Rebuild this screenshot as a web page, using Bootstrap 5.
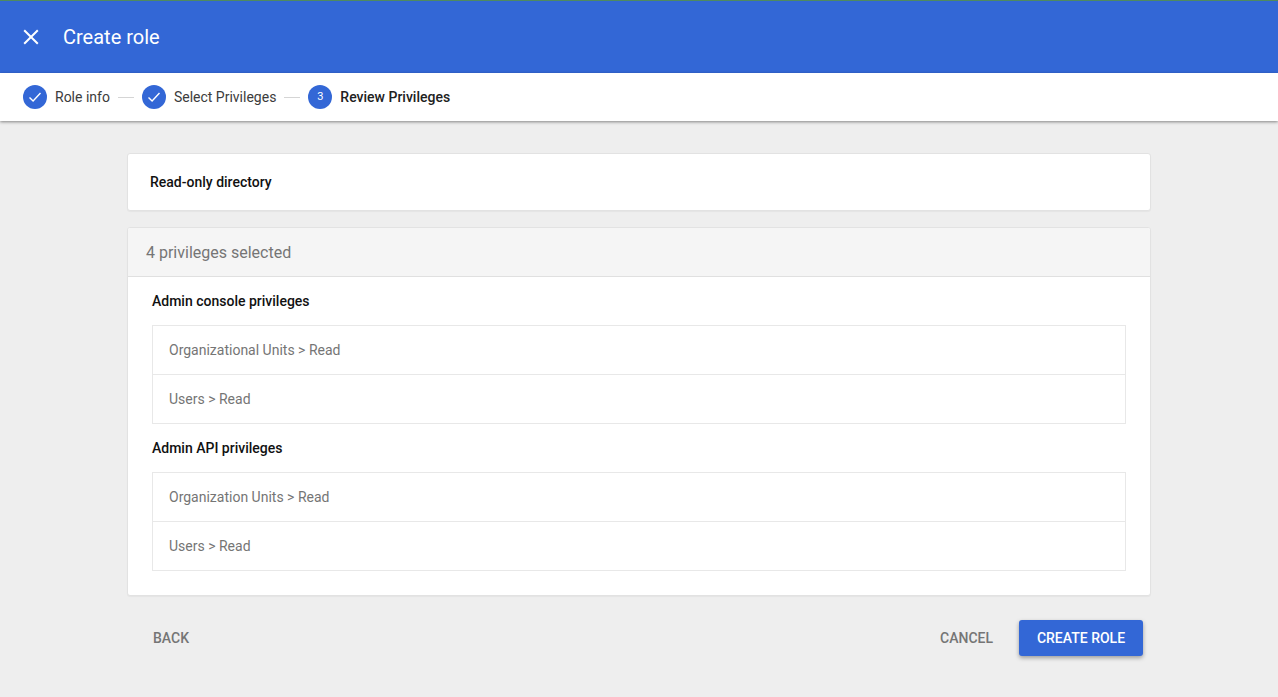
<!DOCTYPE html>
<html lang="en">
<head>
<meta charset="utf-8">
<title>Create role</title>
<link href="https://cdn.jsdelivr.net/npm/bootstrap@5.3.0/dist/css/bootstrap.min.css" rel="stylesheet">
<style>
html,body{height:697px;overflow:hidden}
body{background:#eee;font-family:Roboto,"Liberation Sans",sans-serif;font-size:14px;color:#212121}
.app-bar{height:73px;background:#3367d6;border-top:1px solid #4f8a5f;color:#fff;padding-left:23px;gap:24px}
.app-bar svg{display:block}
.app-title{font-size:20px;line-height:24px}
.stepper{height:48px;background:#fff;padding-left:23px;box-shadow:0 1px 3px rgba(0,0,0,.45);position:relative}
.step-dot{width:24px;height:24px;border-radius:50%;background:#3367d6;color:#fff;font-size:11px;flex:none}
.step-name{margin-left:8px;color:#3c3c3c;padding-top:1px}
.step-on{font-weight:500;color:#212121}
.step-line{width:16px;height:1px;background:#d5d5d5;margin:0 8px}
.page-body{width:1024px;margin:32px 0 0 127px}
.pane{background:#fff;border:1px solid #e2e2e2;border-radius:3px;box-shadow:0 1px 1px rgba(0,0,0,.04)}
.name-pane{height:58px;padding-left:22px;font-weight:500;color:#111}
.priv-pane{margin-top:16px;height:369px;overflow:hidden}
.priv-head{height:49px;background:#f5f5f5;border-bottom:1px solid #e0e0e0;padding:1px 0 0 18px;font-size:16px;color:#757575}
.priv-main{padding:0 24px}
.group-label{height:48px;font-weight:500;color:#111}
.priv-list{border:1px solid #e8e8e8}
.priv-row{height:48px;padding-left:16px;color:#757575}
.priv-row+.priv-row{height:49px;border-top:1px solid #e8e8e8}
.foot{margin-top:24px;padding:0 8px 0 26px;height:36px}
.txt-btn{font-weight:500;color:#757575;font-size:14px;background:none;border:0;padding:0;text-transform:uppercase}
.main-btn{width:124px;height:36px;background:#3367d6;color:#fff;font-weight:500;font-size:14px;border:0;border-radius:3px;box-shadow:0 2px 4px rgba(0,0,0,.35);padding:0;text-transform:uppercase;margin-left:26px}
</style>
</head>
<body>
<header class="app-bar d-flex align-items-center">
  <svg width="16" height="16" viewBox="0 0 16 16" aria-hidden="true"><path d="M1.2 1.2l13.6 13.6M14.8 1.2L1.2 14.8" stroke="#fff" stroke-width="2" fill="none"/></svg>
  <div class="app-title">Create role</div>
</header>
<nav class="stepper d-flex align-items-center">
  <span class="step-dot d-flex align-items-center justify-content-center"><svg width="14" height="12" viewBox="0 0 14 12" aria-hidden="true"><path d="M1.5 6.5l3.6 3.6 7.4-8" stroke="#fff" stroke-width="1.4" fill="none"/></svg></span>
  <span class="step-name">Role info</span>
  <span class="step-line"></span>
  <span class="step-dot d-flex align-items-center justify-content-center"><svg width="14" height="12" viewBox="0 0 14 12" aria-hidden="true"><path d="M1.5 6.5l3.6 3.6 7.4-8" stroke="#fff" stroke-width="1.4" fill="none"/></svg></span>
  <span class="step-name">Select Privileges</span>
  <span class="step-line"></span>
  <span class="step-dot d-flex align-items-center justify-content-center">3</span>
  <span class="step-name step-on">Review Privileges</span>
</nav>
<main class="page-body">
  <section class="pane name-pane d-flex align-items-center">Read-only directory</section>
  <section class="pane priv-pane">
    <div class="priv-head d-flex align-items-center">4 privileges selected</div>
    <div class="priv-main">
      <div class="group-label d-flex align-items-center">Admin console privileges</div>
      <div class="priv-list">
        <div class="priv-row d-flex align-items-center">Organizational Units &gt; Read</div>
        <div class="priv-row d-flex align-items-center">Users &gt; Read</div>
      </div>
      <div class="group-label d-flex align-items-center">Admin API privileges</div>
      <div class="priv-list">
        <div class="priv-row d-flex align-items-center">Organization Units &gt; Read</div>
        <div class="priv-row d-flex align-items-center">Users &gt; Read</div>
      </div>
    </div>
  </section>
  <div class="foot d-flex align-items-center">
    <button class="txt-btn" type="button">Back</button>
    <button class="txt-btn ms-auto" type="button">Cancel</button>
    <button class="main-btn" type="button">Create role</button>
  </div>
</main>
<script src="https://cdn.jsdelivr.net/npm/bootstrap@5.3.0/dist/js/bootstrap.bundle.min.js"></script>
</body>
</html>
